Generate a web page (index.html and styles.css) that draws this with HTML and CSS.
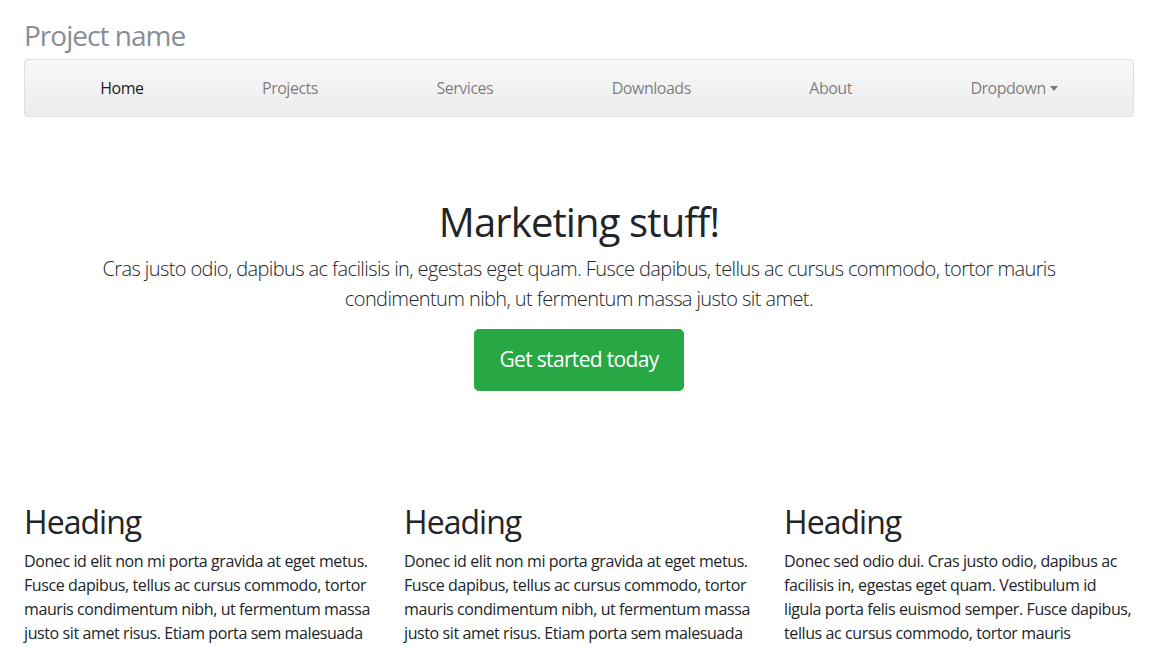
FILE: index.html
```html
<!DOCTYPE html>
<html lang="en">
<head>
<meta charset="utf-8">
<title>Justified Nav</title>
<link rel="stylesheet" href="styles.css">
</head>
<body>
<div class="container">
  <header class="masthead">
    <h3 class="brand">Project name</h3>
    <nav class="navbar">
      <ul class="nav">
        <li class="nav-item"><a class="nav-link active" href="#">Home</a></li>
        <li class="nav-item"><a class="nav-link" href="#">Projects</a></li>
        <li class="nav-item"><a class="nav-link" href="#">Services</a></li>
        <li class="nav-item"><a class="nav-link" href="#">Downloads</a></li>
        <li class="nav-item"><a class="nav-link" href="#">About</a></li>
        <li class="nav-item"><a class="nav-link dropdown-toggle" href="#">Dropdown</a></li>
      </ul>
    </nav>
  </header>

  <section class="jumbotron">
    <h1 class="jumbo-title">Marketing stuff!</h1>
    <p class="lead">Cras justo odio, dapibus ac facilisis in, egestas eget quam. Fusce dapibus, tellus ac cursus commodo, tortor mauris condimentum nibh, ut fermentum massa justo sit amet.</p>
    <a class="btn btn-success" href="#">Get started today</a>
  </section>

  <div class="row">
    <div class="col">
      <h2 class="col-title">Heading</h2>
      <p class="col-text">Donec id elit non mi porta gravida at eget metus. Fusce dapibus, tellus ac cursus commodo, tortor mauris condimentum nibh, ut fermentum massa justo sit amet risus. Etiam porta sem malesuada magna mollis euismod. Donec sed odio dui.</p>
    </div>
    <div class="col">
      <h2 class="col-title">Heading</h2>
      <p class="col-text">Donec id elit non mi porta gravida at eget metus. Fusce dapibus, tellus ac cursus commodo, tortor mauris condimentum nibh, ut fermentum massa justo sit amet risus. Etiam porta sem malesuada magna mollis euismod. Donec sed odio dui.</p>
    </div>
    <div class="col">
      <h2 class="col-title">Heading</h2>
      <p class="col-text">Donec sed odio dui. Cras justo odio, dapibus ac facilisis in, egestas eget quam. Vestibulum id ligula porta felis euismod semper. Fusce dapibus, tellus ac cursus commodo, tortor mauris condimentum nibh, ut fermentum massa justo sit amet risus.</p>
    </div>
  </div>
</div>
</body>
</html>
```
FILE: styles.css
```css
* { box-sizing: border-box; }

body {
  margin: 0;
  padding-top: 18px;
  font-family: "Open Sans", "Noto Sans", sans-serif;
  font-size: 16px;
  line-height: 24px;
  letter-spacing: -0.025em;
  color: #212529;
  background: #fff;
}

.container {
  max-width: 1140px;
  margin: 0 auto;
  padding: 0 15px;
}

.brand {
  margin: 0 0 7px;
  font-size: 28px;
  line-height: 34px;
  font-weight: 400;
  letter-spacing: -0.035em;
  color: #868e96;
}

.navbar {
  padding: 8px 16px;
  border: 1px solid #dfdfdf;
  border-radius: 4px;
  background: linear-gradient(to bottom, #f8f8f8 0%, #ececec 100%);
}

.nav {
  display: flex;
  margin: 0;
  padding: 0;
  list-style: none;
}

.nav-item {
  flex: 1 1 auto;
  text-align: center;
}

.nav-link {
  display: block;
  padding: 8px 8px;
  line-height: 24px;
  letter-spacing: -0.03em;
  color: rgba(0, 0, 0, 0.5);
  text-decoration: none;
}

.nav-link.active {
  color: rgba(0, 0, 0, 0.9);
}

.dropdown-toggle::after {
  content: "";
  display: inline-block;
  margin-left: 4px;
  vertical-align: 3px;
  border-top: 5px solid;
  border-left: 4px solid transparent;
  border-right: 4px solid transparent;
}

.jumbotron {
  padding: 81px 32px 64px;
  margin-bottom: 48px;
  text-align: center;
}

.jumbo-title {
  margin: 0 0 8px;
  font-size: 40px;
  line-height: 48px;
  font-weight: 400;
  letter-spacing: -0.022em;
}

.lead {
  margin: 0 0 15px;
  font-size: 20px;
  line-height: 30px;
  font-weight: 300;
  letter-spacing: -0.03em;
}

.btn {
  display: inline-block;
  padding: 14px 24px;
  font-size: 21px;
  line-height: 31.5px;
  letter-spacing: -0.032em;
  border-radius: 4.8px;
  text-decoration: none;
}

.btn-success {
  color: #fff;
  background: #28a745;
  border: 1px solid #28a745;
}

.row {
  display: grid;
  grid-template-columns: repeat(3, 1fr);
  gap: 30px;
}

.col-title {
  margin: 0 0 8px;
  font-size: 32px;
  line-height: 38px;
  font-weight: 400;
  letter-spacing: -0.03em;
}

.col-text {
  margin: 0 0 16px;
}
```
